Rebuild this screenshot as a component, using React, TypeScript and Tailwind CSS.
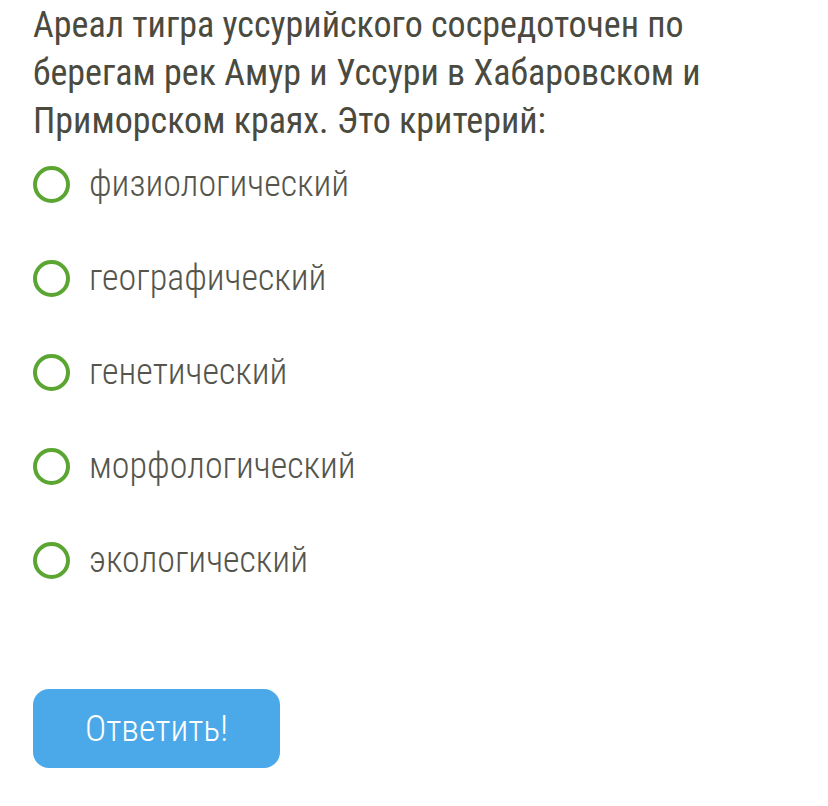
const options = [
  "физиологический",
  "географический",
  "генетический",
  "морфологический",
  "экологический",
];

export default function App() {
  return (
    <div
      className="min-h-[806px] w-[828px] bg-white pl-[33px] pt-px"
      style={{ fontFamily: "'Roboto Condensed', Roboto, 'Liberation Sans', sans-serif", fontStretch: "condensed" }}
    >
      {/* Question */}
      <p className="text-[36px] leading-[48px] text-[#4a4a3f]">
        Ареал тигра уссурийского сосредоточен по
        <br />
        берегам рек Амур и Уссури в Хабаровском и
        <br />
        Приморском краях. Это критерий:
      </p>

      {/* Options */}
      <div className="mt-[15px] flex flex-col gap-[46px]">
        {options.map((opt) => (
          <label key={opt} className="flex h-[48px] items-center">
            <span className="h-[37px] w-[37px] shrink-0 rounded-full border-[4px] border-[#5ba633]" />
            <span className="ml-[19px] text-[36px] font-light text-[#55554c]">{opt}</span>
          </label>
        ))}
      </div>

      {/* Submit */}
      <button className="mt-[105px] flex h-[79px] w-[247px] items-center justify-center rounded-[16px] bg-[#4ba9e9] text-[36px] font-light text-white">
        Ответить!
      </button>
    </div>
  );
}
